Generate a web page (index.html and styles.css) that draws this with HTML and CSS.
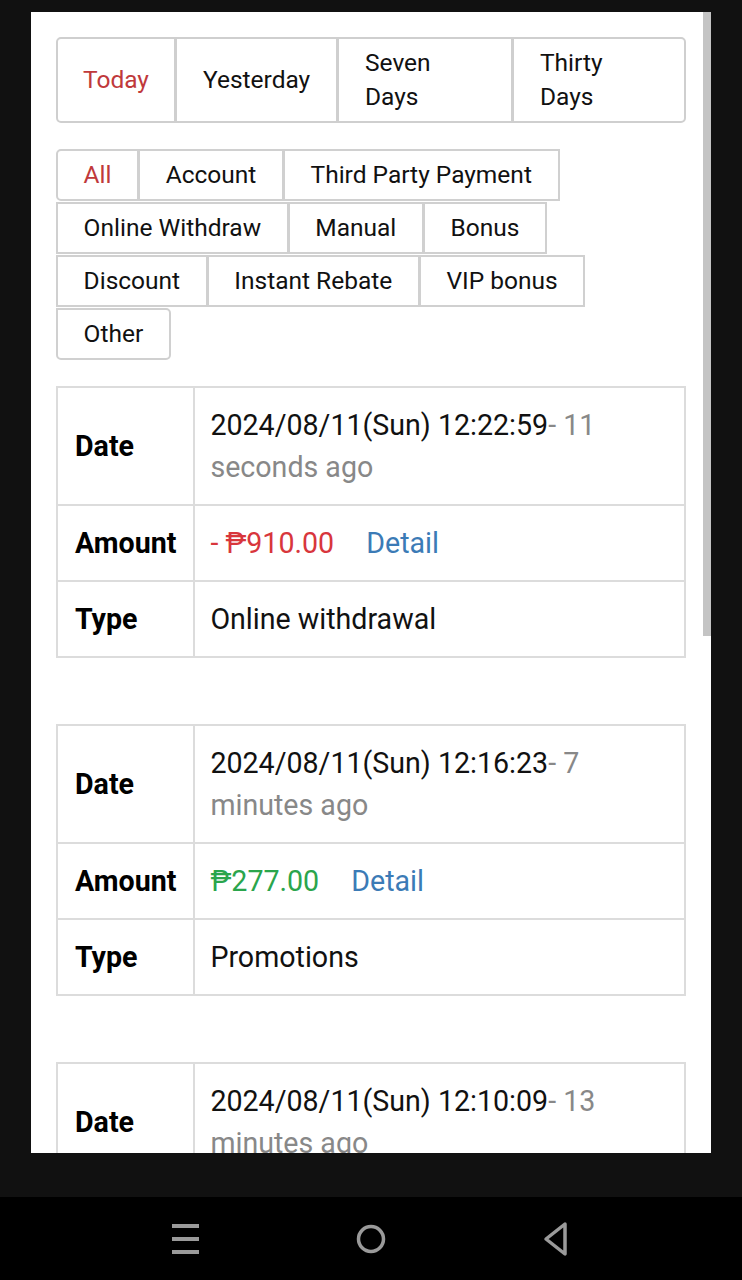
FILE: index.html
```html
<!DOCTYPE html>
<html lang="en">
<head>
<meta charset="utf-8">
<title>Transactions</title>
<link rel="stylesheet" href="styles.css">
</head>
<body>
<div class="screen">
  <main class="panel">
    <div class="range">
      <div class="range-item active">Today</div>
      <div class="range-item">Yesterday</div>
      <div class="range-item">Seven Days</div>
      <div class="range-item">Thirty Days</div>
    </div>

    <div class="filters">
      <span class="chip first active">All</span>
      <span class="chip">Account</span>
      <span class="chip">Third Party Payment</span>
      <span class="chip">Online Withdraw</span>
      <span class="chip">Manual</span>
      <span class="chip">Bonus</span>
      <span class="chip">Discount</span>
      <span class="chip">Instant Rebate</span>
      <span class="chip">VIP bonus</span>
      <span class="chip last">Other</span>
    </div>

    <table class="record">
      <tr>
        <th>Date</th>
        <td>2024/08/11(Sun) 12:22:59<span class="ago">- 11 seconds ago</span></td>
      </tr>
      <tr>
        <th>Amount</th>
        <td><span class="neg">- ₱910.00</span><a class="detail" href="#">Detail</a></td>
      </tr>
      <tr>
        <th>Type</th>
        <td>Online withdrawal</td>
      </tr>
    </table>

    <table class="record">
      <tr>
        <th>Date</th>
        <td>2024/08/11(Sun) 12:16:23<span class="ago">- 7 minutes ago</span></td>
      </tr>
      <tr>
        <th>Amount</th>
        <td><span class="pos">₱277.00</span><a class="detail" href="#">Detail</a></td>
      </tr>
      <tr>
        <th>Type</th>
        <td>Promotions</td>
      </tr>
    </table>

    <table class="record">
      <tr>
        <th>Date</th>
        <td>2024/08/11(Sun) 12:10:09<span class="ago">- 13 minutes ago</span></td>
      </tr>
      <tr>
        <th>Amount</th>
        <td><span class="neg">- ₱100.00</span><a class="detail" href="#">Detail</a></td>
      </tr>
      <tr>
        <th>Type</th>
        <td>Online withdrawal</td>
      </tr>
    </table>

    <div class="scrollbar"></div>
  </main>

  <nav class="navbar">
    <span class="nav-slot">
      <svg width="30" height="30" viewBox="0 0 30 30"><g stroke="#9a9a9a" stroke-width="4"><line x1="1" y1="2" x2="28" y2="2"/><line x1="1" y1="15" x2="28" y2="15"/><line x1="1" y1="28" x2="28" y2="28"/></g></svg>
    </span>
    <span class="nav-slot">
      <svg width="32" height="32" viewBox="0 0 32 32"><circle cx="16" cy="16" r="12.5" fill="none" stroke="#9a9a9a" stroke-width="3.5"/></svg>
    </span>
    <span class="nav-slot">
      <svg width="32" height="36" viewBox="0 0 32 36"><path d="M25 3 L6 18 L25 33 Z" fill="none" stroke="#9a9a9a" stroke-width="3.5" stroke-linejoin="round"/></svg>
    </span>
  </nav>
</div>
</body>
</html>
```

FILE: styles.css
```css
* { box-sizing: border-box; }

html, body {
  margin: 0;
  padding: 0;
  background: #111111;
  font-family: Roboto, "Noto Sans", "Liberation Sans", sans-serif;
}

.screen {
  width: 742px;
  height: 1280px;
  display: flex;
  flex-direction: column;
  padding-top: 12px;
}

.panel {
  position: relative;
  margin: 0 31px;
  height: 1141px;
  flex: none;
  background: #ffffff;
  overflow: hidden;
  padding: 25px 25px 0;
}

.scrollbar {
  position: absolute;
  top: 0;
  right: 0;
  width: 8px;
  height: 624px;
  background: #c4c4c4;
}

/* Date range tabs */
.range {
  display: grid;
  grid-template-columns: 116px 162px 175px 1fr;
  border: 2px solid #cfcfcf;
  border-radius: 5px;
}

.range-item {
  display: flex;
  align-items: center;
  padding: 7px 22px 7px 26px;
  min-height: 81px;
  font-size: 24.5px;
  line-height: 34px;
  color: #111;
  border-left: 3px solid #cfcfcf;
}

.range-item:first-child {
  border-left: none;
  padding-left: 25px;
}

.range-item.active { color: #c0393b; }

/* Filter chips */
.filters {
  display: flex;
  flex-wrap: wrap;
  row-gap: 1px;
  margin-top: 26px;
  margin-bottom: 26px;
}

.chip {
  display: inline-block;
  padding: 7px 25.6px;
  font-size: 24.5px;
  line-height: 34px;
  color: #111;
  border: 2px solid #d0d0d0;
  margin-right: -1px;
  white-space: nowrap;
}

.chip.first { border-radius: 5px 0 0 5px; }
.chip.last { border-radius: 0 5px 5px 5px; }
.chip.active { color: #c0393b; }

/* Records */
.record {
  width: 630px;
  border-collapse: collapse;
  border: 2px solid #dcdcdc;
  margin-bottom: 66px;
}

.record th,
.record td {
  border: 2px solid #dcdcdc;
  padding: 16px 17px;
  font-size: 28.6px;
  line-height: 42px;
  text-align: left;
  vertical-align: middle;
}

.record th {
  width: 137px;
  font-weight: 700;
  color: #000;
}

.record td {
  padding-left: 15px;
  color: #111;
  font-weight: 400;
}

.ago { color: #888888; }

.neg { color: #d8363c; }
.pos { color: #2aa54c; }

.detail {
  color: #3b7bb6;
  text-decoration: none;
  margin-left: 32px;
}

/* Android nav bar */
.navbar {
  margin-top: auto;
  height: 83px;
  background: #000;
  display: grid;
  grid-template-columns: repeat(3, 185px);
  justify-content: center;
  align-items: center;
}

.nav-slot {
  display: flex;
  justify-content: center;
  align-items: center;
}
```
